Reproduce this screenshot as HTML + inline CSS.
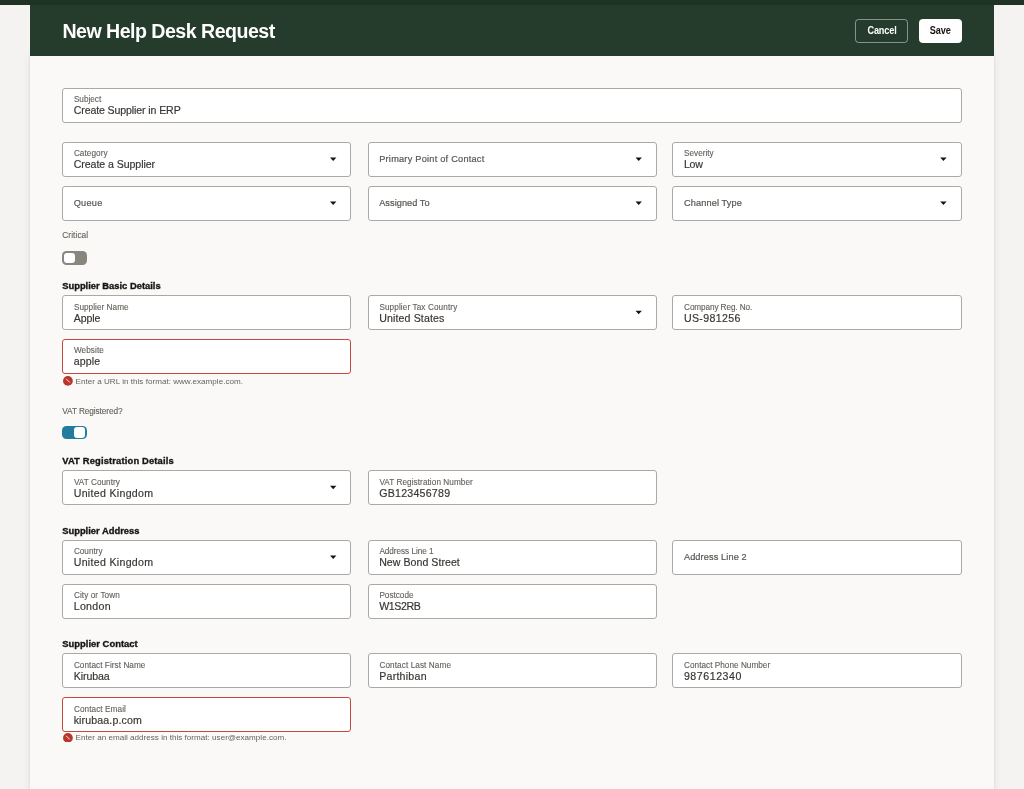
<!DOCTYPE html>
<html><head><meta charset="utf-8"><title>New Help Desk Request</title>
<style>
html,body{margin:0;padding:0}
body{width:1024px;height:789px;overflow:hidden;position:relative;background:#f4f3f1;font-family:"Liberation Sans", sans-serif}
.wrap{position:absolute;left:0;top:0;width:1024px;height:789px;overflow:hidden;will-change:transform}
.strip{position:absolute;left:0;top:0;width:1024px;height:4.6px;background:#1f3325}
.dlg{position:absolute;left:30.3px;top:55.7px;width:963.4px;height:740px;background:#faf9f7;box-shadow:0 0 3px rgba(0,0,0,0.12),0 0 10px rgba(0,0,0,0.05)}
.hdr{position:absolute;left:30.3px;top:4.6px;width:963.4px;height:51.1px;background:#253c2d}
.title{position:absolute;left:62.4px;top:21.5px;font-size:19.6px;line-height:19.6px;font-weight:bold;color:#fff;letter-spacing:-0.52px;white-space:nowrap}
.btn{position:absolute;top:18.6px;height:24.4px;box-sizing:border-box;border-radius:3.5px;font-weight:bold;font-size:10.6px;line-height:21.6px;text-align:center;white-space:nowrap;letter-spacing:-0.1px}
.btn span{display:inline-block;transform:scaleX(0.86)}
.cancel{left:855.2px;width:52.9px;border:1px solid rgba(255,255,255,0.45);color:#fff}
.save{left:918.6px;width:43.2px;background:#fff;border:1px solid #fff;color:#161513}
.box{position:absolute;box-sizing:border-box;background:#fff;border:1px solid #aba9a6;border-radius:3px}
.box.err{border-color:#c4493b}
.lbl,.val,.ph,.hd,.etx{position:absolute;line-height:1;white-space:nowrap}
.lbl{color:#65615c;-webkit-text-stroke:0.12px #65615c}
.ph{color:#5a5652;-webkit-text-stroke:0.2px #5a5652}
.val{color:#383633;-webkit-text-stroke:0.18px #383633}
.hd{color:#161513;font-weight:bold;-webkit-text-stroke:0.35px #161513}
.etx{color:#67635e}
.arr{position:absolute;display:block}
.tg{position:absolute;left:62.4px;width:24.2px;height:13.6px;box-sizing:border-box;border-radius:4.5px;background:#8b8580}
.tg .kn{position:absolute;left:1.8px;top:1.5px;width:10.6px;height:10.6px;border-radius:3px;background:#fff}
.tg.on{background:#227c9d}
.tg.on .kn{left:11.8px}
.eic{position:absolute;left:62.9px;width:9.8px;height:9.8px}
.eic svg{display:block}
</style></head><body>
<div class="wrap">
<div class="strip"></div>
<div class="dlg"></div>
<div class="hdr"></div>
<div class="title">New Help Desk Request</div>
<div class="btn cancel"><span>Cancel</span></div>
<div class="btn save"><span>Save</span></div>
<div class="box" style="left:62.10px;top:88.00px;width:899.80px;height:34.7px"></div>
<div class="lbl" style="left:73.90px;top:96.46px;font-size:8.2px;letter-spacing:0.000px;">Subject</div>
<div class="val" style="left:73.70px;top:105.33px;font-size:10.6px;letter-spacing:-0.119px;">Create Supplier in ERP</div>
<div class="box" style="left:62.10px;top:142.10px;width:289.3px;height:34.7px"></div>
<div class="lbl" style="left:73.90px;top:149.56px;font-size:8.2px;letter-spacing:0.071px;">Category</div>
<div class="val" style="left:73.70px;top:159.43px;font-size:10.6px;letter-spacing:-0.062px;">Create a Supplier</div>
<svg class="arr" style="left:328px;top:155px" width="10" height="8"><path d="M2.00 2.45H8.40L5.20 5.95Z" fill="#161513"/></svg>
<div class="box" style="left:367.60px;top:142.10px;width:289.3px;height:34.7px"></div>
<div class="ph" style="left:379.20px;top:155.01px;font-size:9.2px;letter-spacing:0.239px;">Primary Point of Contact</div>
<svg class="arr" style="left:633px;top:155px" width="10" height="8"><path d="M2.50 2.45H8.90L5.70 5.95Z" fill="#161513"/></svg>
<div class="box" style="left:672.30px;top:142.10px;width:289.3px;height:34.7px"></div>
<div class="lbl" style="left:684.10px;top:149.56px;font-size:8.2px;letter-spacing:-0.000px;">Severity</div>
<div class="val" style="left:683.90px;top:159.43px;font-size:10.6px;letter-spacing:-0.250px;">Low</div>
<svg class="arr" style="left:938px;top:155px" width="10" height="8"><path d="M2.20 2.45H8.60L5.40 5.95Z" fill="#161513"/></svg>
<div class="box" style="left:62.10px;top:186.20px;width:289.3px;height:34.7px"></div>
<div class="ph" style="left:73.70px;top:199.11px;font-size:9.2px;letter-spacing:0.250px;">Queue</div>
<svg class="arr" style="left:328px;top:199px" width="10" height="8"><path d="M2.00 2.55H8.40L5.20 6.05Z" fill="#161513"/></svg>
<div class="box" style="left:367.60px;top:186.20px;width:289.3px;height:34.7px"></div>
<div class="ph" style="left:379.20px;top:199.11px;font-size:9.2px;letter-spacing:0.050px;">Assigned To</div>
<svg class="arr" style="left:633px;top:199px" width="10" height="8"><path d="M2.50 2.55H8.90L5.70 6.05Z" fill="#161513"/></svg>
<div class="box" style="left:672.30px;top:186.20px;width:289.3px;height:34.7px"></div>
<div class="ph" style="left:683.90px;top:199.11px;font-size:9.2px;letter-spacing:0.136px;">Channel Type</div>
<svg class="arr" style="left:938px;top:199px" width="10" height="8"><path d="M2.20 2.55H8.60L5.40 6.05Z" fill="#161513"/></svg>
<div class="lbl" style="left:62.30px;top:231.37px;font-size:8.3px;letter-spacing:0.071px;">Critical</div>
<div class="tg" style="top:251.20px"><div class="kn"></div></div>
<div class="hd" style="left:62.20px;top:280.94px;font-size:9.4px;letter-spacing:-0.000px;">Supplier Basic Details</div>
<div class="box" style="left:62.10px;top:295.40px;width:289.3px;height:34.7px"></div>
<div class="lbl" style="left:73.90px;top:303.86px;font-size:8.2px;letter-spacing:0.042px;">Supplier Name</div>
<div class="val" style="left:73.70px;top:312.73px;font-size:10.6px;letter-spacing:-0.125px;">Apple</div>
<div class="box" style="left:367.60px;top:295.40px;width:289.3px;height:34.7px"></div>
<div class="lbl" style="left:379.40px;top:303.86px;font-size:8.2px;letter-spacing:0.105px;">Supplier Tax Country</div>
<div class="val" style="left:379.20px;top:312.73px;font-size:10.6px;letter-spacing:0.125px;">United States</div>
<svg class="arr" style="left:633px;top:308px" width="10" height="8"><path d="M2.50 2.75H8.90L5.70 6.25Z" fill="#161513"/></svg>
<div class="box" style="left:672.30px;top:295.40px;width:289.3px;height:34.7px"></div>
<div class="lbl" style="left:684.10px;top:303.86px;font-size:8.2px;letter-spacing:-0.100px;">Company Reg. No.</div>
<div class="val" style="left:683.90px;top:312.73px;font-size:10.6px;letter-spacing:0.375px;">US-981256</div>
<div class="box err" style="left:62.10px;top:339.00px;width:289.3px;height:34.7px"></div>
<div class="lbl" style="left:73.90px;top:347.46px;font-size:8.2px;letter-spacing:0.083px;">Website</div>
<div class="val" style="left:73.70px;top:356.33px;font-size:10.6px;letter-spacing:0.125px;">apple</div>
<div class="eic" style="top:375.90px"><svg width="9.8" height="9.8" viewBox="0 0 10 10"><circle cx="5" cy="5" r="5" fill="#b9372a"/><path d="M3.2 2.9 L6.9 6.6" stroke="#fff" stroke-width="0.9"/></svg></div>
<div class="etx" style="left:75.60px;top:377.87px;font-size:8.07px;letter-spacing:0.023px;">Enter a URL in this format: www.example.com.</div>
<div class="lbl" style="left:62.30px;top:407.47px;font-size:8.3px;letter-spacing:-0.107px;">VAT Registered?</div>
<div class="tg on" style="top:425.80px"><div class="kn"></div></div>
<div class="hd" style="left:62.20px;top:456.34px;font-size:9.4px;letter-spacing:0.152px;">VAT Registration Details</div>
<div class="box" style="left:62.10px;top:470.40px;width:289.3px;height:34.7px"></div>
<div class="lbl" style="left:73.90px;top:478.86px;font-size:8.2px;letter-spacing:0.050px;">VAT Country</div>
<div class="val" style="left:73.70px;top:487.73px;font-size:10.6px;letter-spacing:0.307px;">United Kingdom</div>
<svg class="arr" style="left:328px;top:483px" width="10" height="8"><path d="M2.00 2.75H8.40L5.20 6.25Z" fill="#161513"/></svg>
<div class="box" style="left:367.60px;top:470.40px;width:289.3px;height:34.7px"></div>
<div class="lbl" style="left:379.40px;top:478.86px;font-size:8.2px;letter-spacing:0.068px;">VAT Registration Number</div>
<div class="val" style="left:379.20px;top:487.73px;font-size:10.6px;letter-spacing:0.250px;">GB123456789</div>
<div class="hd" style="left:62.20px;top:526.04px;font-size:9.4px;letter-spacing:0.000px;">Supplier Address</div>
<div class="box" style="left:62.10px;top:540.10px;width:289.3px;height:34.7px"></div>
<div class="lbl" style="left:73.90px;top:547.56px;font-size:8.2px;">Country</div>
<div class="val" style="left:73.70px;top:557.43px;font-size:10.6px;letter-spacing:0.307px;">United Kingdom</div>
<svg class="arr" style="left:328px;top:553px" width="10" height="8"><path d="M2.00 2.45H8.40L5.20 5.95Z" fill="#161513"/></svg>
<div class="box" style="left:367.60px;top:540.10px;width:289.3px;height:34.7px"></div>
<div class="lbl" style="left:379.40px;top:547.56px;font-size:8.2px;letter-spacing:-0.038px;">Address Line 1</div>
<div class="val" style="left:379.20px;top:557.43px;font-size:10.6px;letter-spacing:0.036px;">New Bond Street</div>
<div class="box" style="left:672.30px;top:540.10px;width:289.3px;height:34.7px"></div>
<div class="ph" style="left:683.90px;top:553.01px;font-size:9.2px;letter-spacing:0.115px;">Address Line 2</div>
<div class="box" style="left:62.10px;top:583.90px;width:289.3px;height:34.7px"></div>
<div class="lbl" style="left:73.90px;top:592.36px;font-size:8.2px;letter-spacing:0.091px;">City or Town</div>
<div class="val" style="left:73.70px;top:601.23px;font-size:10.6px;letter-spacing:0.300px;">London</div>
<div class="box" style="left:367.60px;top:583.90px;width:289.3px;height:34.7px"></div>
<div class="lbl" style="left:379.40px;top:592.36px;font-size:8.2px;letter-spacing:-0.000px;">Postcode</div>
<div class="val" style="left:379.20px;top:601.23px;font-size:10.6px;letter-spacing:-0.400px;">W1S2RB</div>
<div class="hd" style="left:62.20px;top:639.24px;font-size:9.4px;letter-spacing:0.033px;">Supplier Contact</div>
<div class="box" style="left:62.10px;top:653.40px;width:289.3px;height:34.7px"></div>
<div class="lbl" style="left:73.90px;top:661.86px;font-size:8.2px;letter-spacing:0.059px;">Contact First Name</div>
<div class="val" style="left:73.70px;top:670.73px;font-size:10.6px;letter-spacing:-0.083px;">Kirubaa</div>
<div class="box" style="left:367.60px;top:653.40px;width:289.3px;height:34.7px"></div>
<div class="lbl" style="left:379.40px;top:661.86px;font-size:8.2px;letter-spacing:0.094px;">Contact Last Name</div>
<div class="val" style="left:379.20px;top:670.73px;font-size:10.6px;letter-spacing:0.250px;">Parthiban</div>
<div class="box" style="left:672.30px;top:653.40px;width:289.3px;height:34.7px"></div>
<div class="lbl" style="left:684.10px;top:661.86px;font-size:8.2px;letter-spacing:0.026px;">Contact Phone Number</div>
<div class="val" style="left:683.90px;top:670.73px;font-size:10.6px;letter-spacing:0.562px;">987612340</div>
<div class="box err" style="left:62.10px;top:697.30px;width:289.3px;height:34.7px"></div>
<div class="lbl" style="left:73.90px;top:705.76px;font-size:8.2px;letter-spacing:0.083px;">Contact Email</div>
<div class="val" style="left:73.70px;top:714.63px;font-size:10.6px;letter-spacing:0.125px;">kirubaa.p.com</div>
<div class="eic" style="top:732.50px"><svg width="9.8" height="9.8" viewBox="0 0 10 10"><circle cx="5" cy="5" r="5" fill="#b9372a"/><path d="M3.2 2.9 L6.9 6.6" stroke="#fff" stroke-width="0.9"/></svg></div>
<div class="etx" style="left:75.60px;top:734.47px;font-size:8.07px;letter-spacing:0.018px;">Enter an email address in this format: user@example.com.</div>
</div>
</body></html>
